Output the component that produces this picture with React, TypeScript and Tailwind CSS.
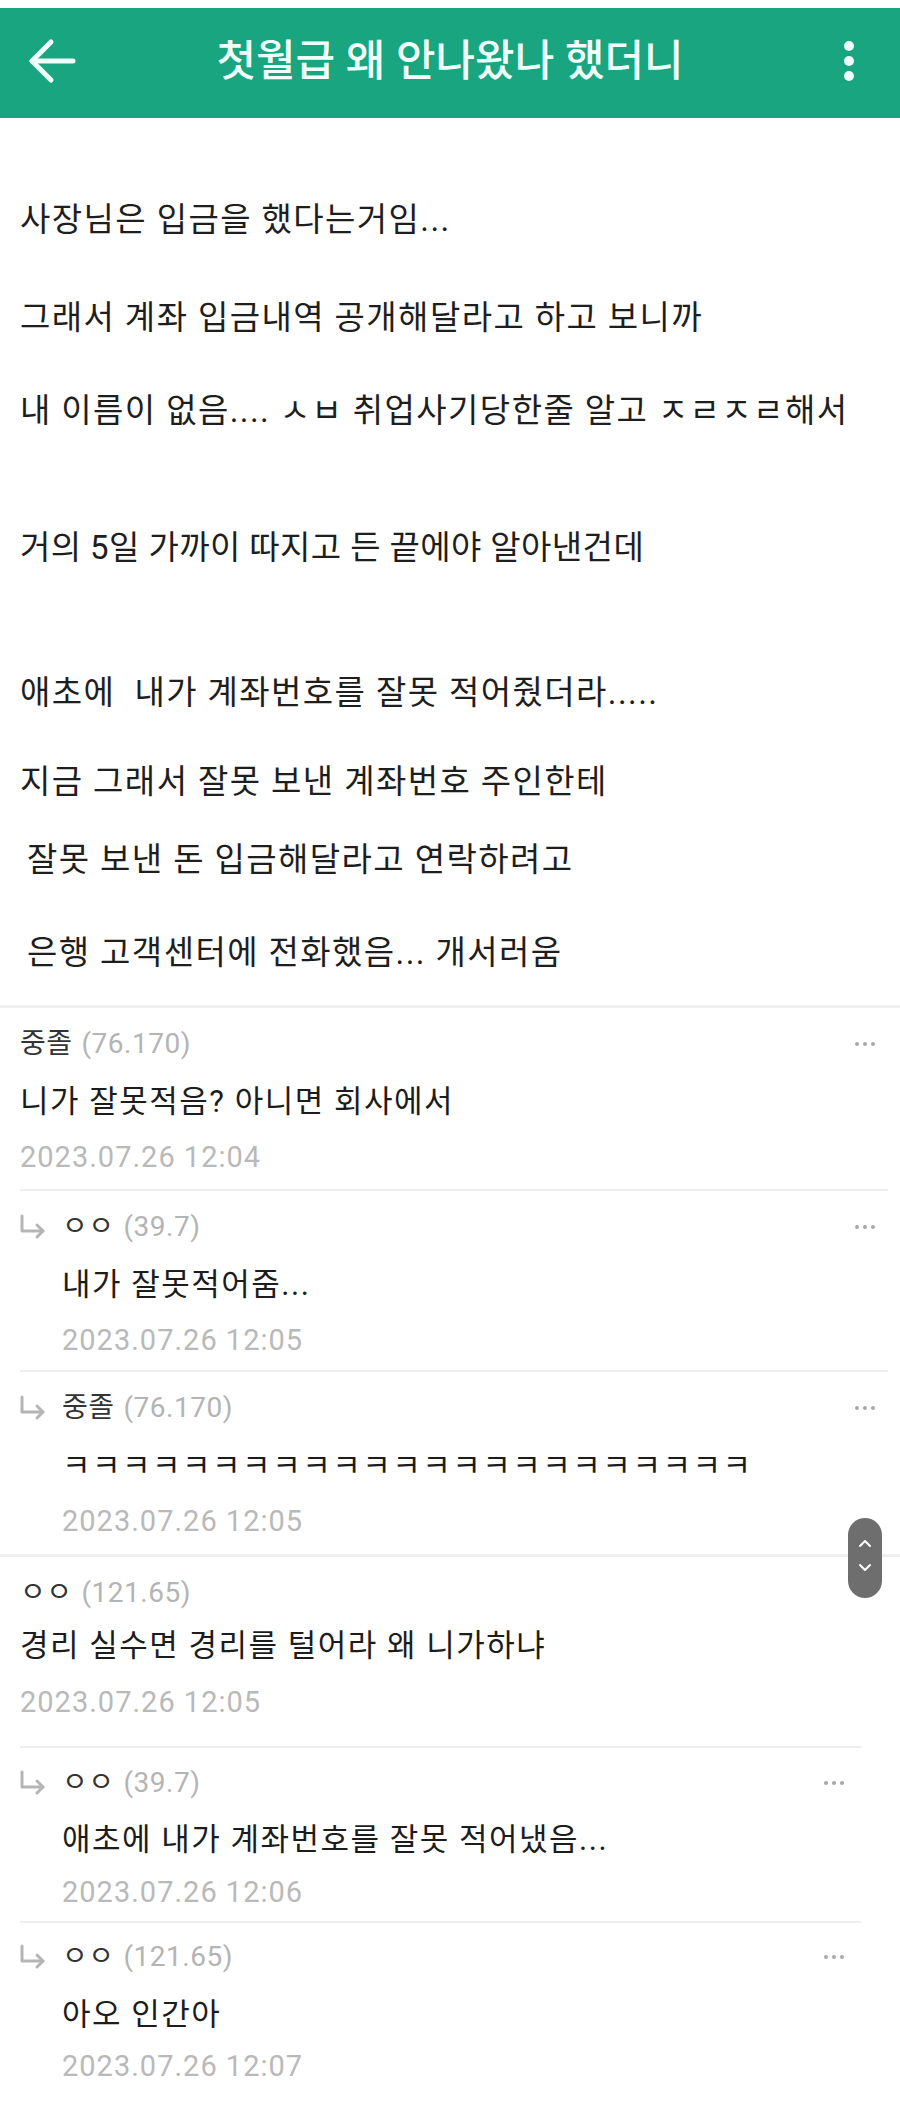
const FONT = "font-['Roboto','Noto_Sans_CJK_KR',sans-serif]"

const postLines = [
  { text: '사장님은 입금을 했다는거임...', cls: 'mt-0' },
  { text: '그래서 계좌 입금내역 공개해달라고 하고 보니까', cls: 'mt-[54px]' },
  { text: '내 이름이 없음.... ㅅㅂ 취업사기당한줄 알고 ㅈㄹㅈㄹ해서', cls: 'mt-[49px]' },
  { text: '거의 5일 가까이 따지고 든 끝에야 알아낸건데', cls: 'mt-[93px] tracking-[0.4px]' },
  { text: '애초에  내가 계좌번호를 잘못 적어줬더라.....', cls: 'mt-[101px]' },
  { text: '지금 그래서 잘못 보낸 계좌번호 주인한테', cls: 'mt-[45px]' },
  { text: '잘못 보낸 돈 입금해달라고 연락하려고', cls: 'mt-[34px] pl-[7px]' },
  { text: '은행 고객센터에 전화했음... 개서러움', cls: 'mt-[49px] pl-[7px]' },
]

type Comment = {
  name: string
  score: string
  text: string
  date: string
  reply: boolean
  pt: string
  textMt: string
  dateMt: string
  pb: string
  dots: string | null
  divider: 'full' | 'inner' | 'innerShort' | null
}

const comments: Comment[] = [
  {
    name: '중졸', score: '(76.170)', text: '니가 잘못적음? 아니면 회사에서', date: '2023.07.26 12:04',
    reply: false, pt: 'pt-[16px]', textMt: 'mt-[10px]', dateMt: 'mt-[7px]', pb: 'pb-[12px]',
    dots: 'right-[25px]', divider: 'inner',
  },
  {
    name: 'ㅇㅇ', score: '(39.7)', text: '내가 잘못적어줌...', date: '2023.07.26 12:05',
    reply: true, pt: 'pt-[16px]', textMt: 'mt-[10px]', dateMt: 'mt-[7px]', pb: 'pb-[10px]',
    dots: 'right-[25px]', divider: 'inner',
  },
  {
    name: '중졸', score: '(76.170)', text: 'ㅋㅋㅋㅋㅋㅋㅋㅋㅋㅋㅋㅋㅋㅋㅋㅋㅋㅋㅋㅋㅋㅋㅋ', date: '2023.07.26 12:05',
    reply: true, pt: 'pt-[16px]', textMt: 'mt-[10px]', dateMt: 'mt-[7px]', pb: 'pb-[13px]',
    dots: 'right-[25px]', divider: 'full',
  },
  {
    name: 'ㅇㅇ', score: '(121.65)', text: '경리 실수면 경리를 털어라 왜 니가하냐', date: '2023.07.26 12:05',
    reply: false, pt: 'pt-[16px]', textMt: 'mt-[5px]', dateMt: 'mt-[8px]', pb: 'pb-[24px]',
    dots: null, divider: 'innerShort',
  },
  {
    name: 'ㅇㅇ', score: '(39.7)', text: '애초에 내가 계좌번호를 잘못 적어냈음...', date: '2023.07.26 12:06',
    reply: true, pt: 'pt-[15px]', textMt: 'mt-[9px]', dateMt: 'mt-[4px]', pb: 'pb-[9px]',
    dots: 'right-[56px]', divider: 'innerShort',
  },
  {
    name: 'ㅇㅇ', score: '(121.65)', text: '아오 인간아', date: '2023.07.26 12:07',
    reply: true, pt: 'pt-[14px]', textMt: 'mt-[10px]', dateMt: 'mt-[3px]', pb: 'pb-0',
    dots: 'right-[56px]', divider: null,
  },
]

function ReplyArrow() {
  return (
    <svg width="30" height="26" viewBox="0 0 30 26" fill="none" stroke="#b5b5b5" strokeWidth="3" strokeLinecap="round" strokeLinejoin="round">
      <path d="M4 2 V17 H25" />
      <path d="M19 11 L25 17 L19 23" />
    </svg>
  )
}

function MoreDots() {
  return (
    <div className="flex items-center gap-[4px]">
      <span className="w-[4px] h-[4px] rounded-full bg-[#a8a8a8]" />
      <span className="w-[4px] h-[4px] rounded-full bg-[#a8a8a8]" />
      <span className="w-[4px] h-[4px] rounded-full bg-[#a8a8a8]" />
    </div>
  )
}

function CommentItem({ c }: { c: Comment }) {
  return (
    <div>
      <div className={`relative ${c.pt} ${c.pb} ${c.reply ? 'pl-[62px]' : 'pl-[20px]'}`}>
        <div className="h-[40px] flex items-center text-[28px] tracking-[0.5px] leading-[40px]">
          {c.reply && (
            <span className="-ml-[44px] w-[44px] flex items-center">
              <ReplyArrow />
            </span>
          )}
          <span className="text-[#333333]">{c.name}</span>
          <span className="ml-[9px] text-[#b4b4b4]">{c.score}</span>
        </div>
        {c.dots && (
          <div className={`absolute top-0 ${c.dots} ${c.pt}`}>
            <div className="h-[40px] flex items-center">
              <MoreDots />
            </div>
          </div>
        )}
        <p className={`${c.textMt} h-[56px] leading-[56px] text-[31px] tracking-[1.5px] text-[#1c1c1c] whitespace-pre`}>{c.text}</p>
        <p className={`${c.dateMt} h-[40px] leading-[40px] text-[29px] tracking-[1px] text-[#b9b9b9]`}>{c.date}</p>
      </div>
      {c.divider === 'full' && <div className="h-[3px] bg-[#f0f0f0]" />}
      {c.divider === 'inner' && <div className="ml-[20px] mr-[12px] h-[2px] bg-[#eeeeee]" />}
      {c.divider === 'innerShort' && <div className="ml-[20px] mr-[39px] h-[2px] bg-[#eeeeee]" />}
    </div>
  )
}

export default function App() {
  return (
    <div className={`relative w-[900px] h-[2108px] overflow-hidden bg-white ${FONT}`}>
      <div className="h-[8px] bg-white" />
      <header className="h-[110px] bg-[#18a57f] grid grid-cols-[100px_1fr_100px] items-center">
        <div className="pl-[28px] pb-[4px]">
          <svg width="48" height="46" viewBox="0 0 48 46" fill="none" stroke="#effff9" strokeWidth="5" strokeLinecap="round" strokeLinejoin="round">
            <path d="M4 23 H45" />
            <path d="M23 4 L4 23 L23 42" />
          </svg>
        </div>
        <h1 className="text-center text-[43px] font-medium text-[#effff9] leading-none pb-[4px]">첫월급 왜 안나왔나 했더니</h1>
        <div className="justify-self-end pr-[46px] pb-[4px] flex flex-col gap-[5px]">
          <span className="w-[10px] h-[10px] rounded-full bg-[#effff9]" />
          <span className="w-[10px] h-[10px] rounded-full bg-[#effff9]" />
          <span className="w-[10px] h-[10px] rounded-full bg-[#effff9]" />
        </div>
      </header>

      <section className="pt-[80px] pb-[30px] pl-[20px] tracking-[1.4px]">
        {postLines.map((l, i) => (
          <p key={i} className={`${l.cls} h-[44px] leading-[44px] text-[33px] text-[#1e1e1e] whitespace-pre`}>
            {l.text}
          </p>
        ))}
      </section>
      <div className="h-[3px] bg-[#f0f0f0]" />

      {comments.map((c, i) => (
        <CommentItem key={i} c={c} />
      ))}

      <div className="absolute left-[848px] top-[1518px] w-[34px] h-[80px] rounded-full bg-[#6e6e6e] flex flex-col items-center pt-[21px] gap-[15px]">
        <svg width="14" height="9" viewBox="0 0 14 9" fill="none" stroke="#ffffff" strokeWidth="2" strokeLinecap="round" strokeLinejoin="round">
          <path d="M2 7 L7 2 L12 7" />
        </svg>
        <svg width="14" height="9" viewBox="0 0 14 9" fill="none" stroke="#ffffff" strokeWidth="2" strokeLinecap="round" strokeLinejoin="round">
          <path d="M2 2 L7 7 L12 2" />
        </svg>
      </div>
    </div>
  )
}
